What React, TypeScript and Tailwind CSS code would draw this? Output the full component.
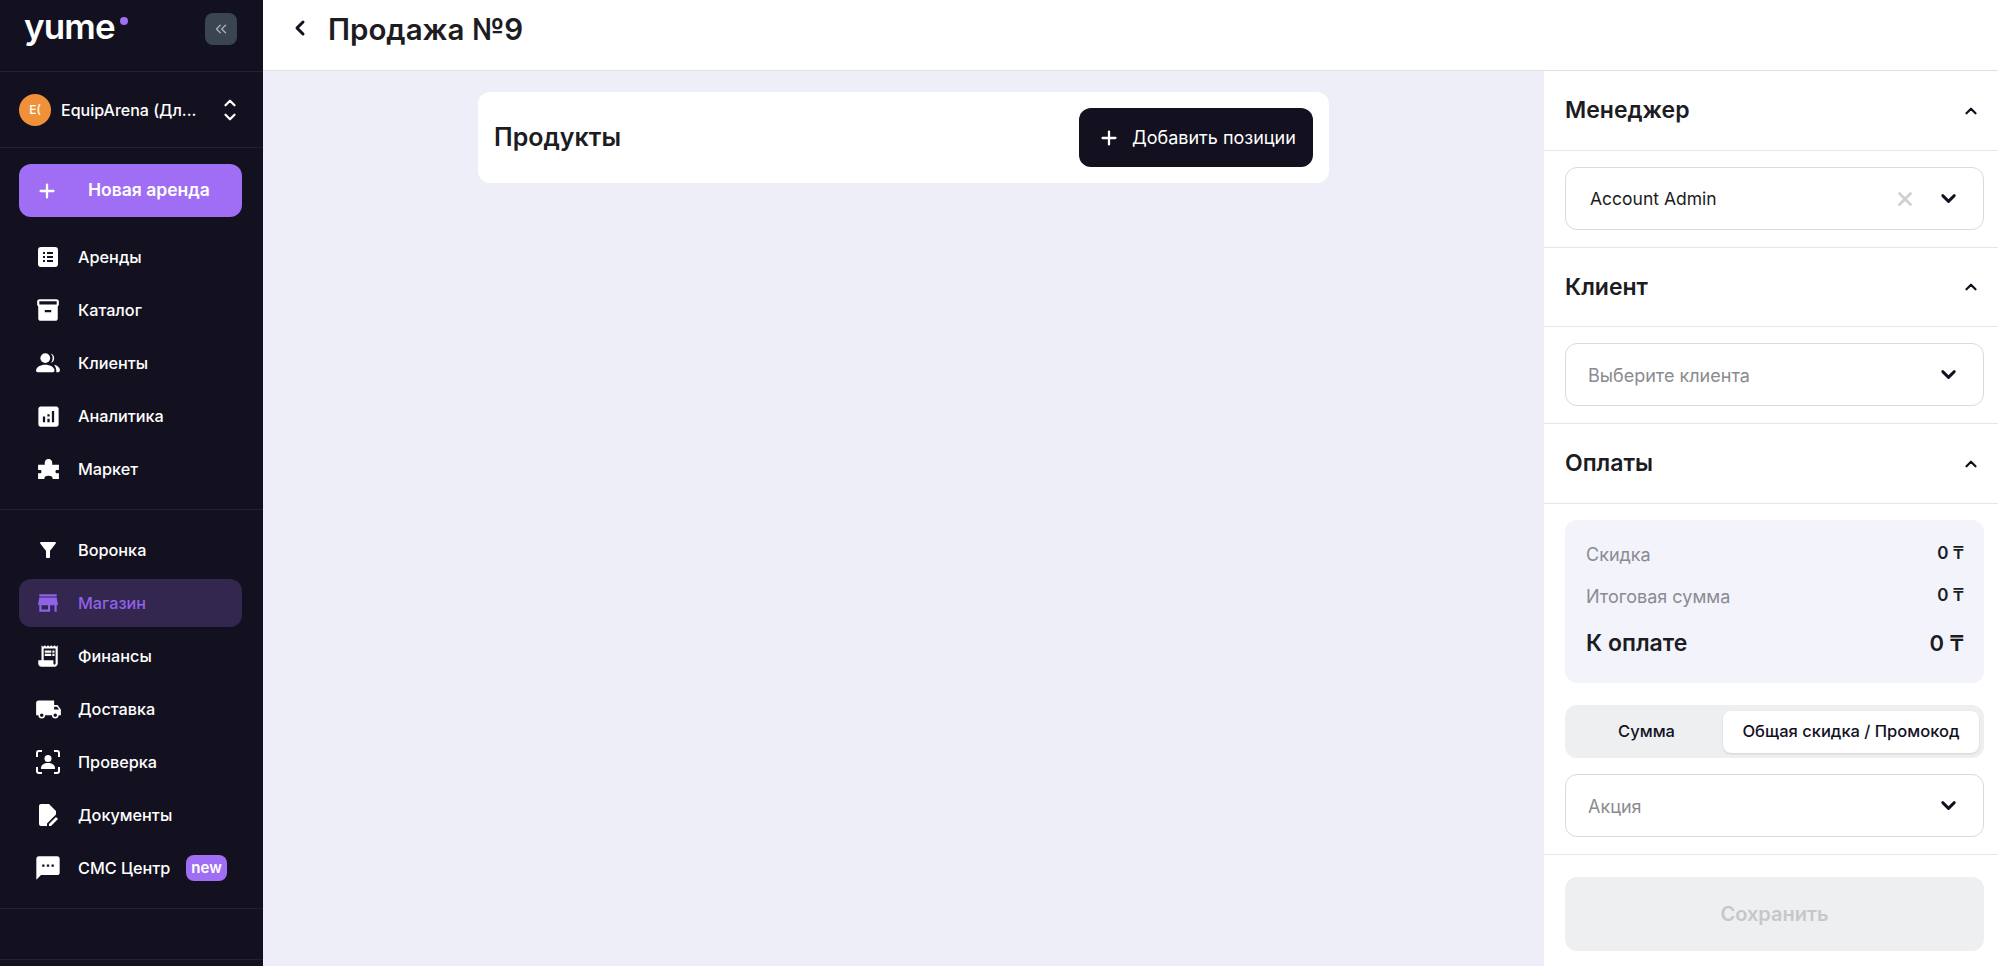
import React from 'react';
import { ChevronDown, ChevronLeft, ChevronUp, ChevronsLeft, Plus, X } from 'lucide-react';
import {
  MdAnalytics,
  MdFilterAlt,
  MdInventory2,
  MdLocalShipping,
  MdReceiptLong,
  MdSms,
  MdStore,
} from 'react-icons/md';

// small hand drawn icons for the ones the packs don't have
const ListIcon = () => (
  <svg width="24" height="24" viewBox="0 0 24 24" fill="currentColor">
    <path
      fillRule="evenodd"
      d="M5 2h14a3 3 0 0 1 3 3v14a3 3 0 0 1-3 3H5a3 3 0 0 1-3-3V5a3 3 0 0 1 3-3zm2 5v2h2V7H7zm4 0v2h6V7h-6zm-4 4v2h2v-2H7zm4 0v2h6v-2h-6zm-4 4v2h2v-2H7zm4 0v2h6v-2h-6z"
    />
  </svg>
);

const PeopleIcon = () => (
  <svg width="26" height="26" viewBox="0 0 24 24" fill="currentColor">
    <circle cx="9.5" cy="7.5" r="4.5" />
    <path d="M1 19c0-3.5 4-5.5 8.5-5.5S18 15.500 18 19c0 1-.6 1.500-1.500 1.500h-14C1.600 20.500 1 20 1 19z" />
    <path d="M14.500 3.200a4.500 4.500 0 0 1 0 8.600 6 6 0 0 0 0-8.600z" />
    <path d="M17.500 13.500c3 .5 5.500 2.500 5.500 5 0 1.200-.6 2-1.500 2h-1.800c.2-2.700-.6-5.200-2.200-7z" />
  </svg>
);

const PuzzleIcon = () => (
  <svg width="25" height="25" viewBox="0 0 24 24" fill="currentColor">
    <path d="M2 7.500h6.500C8 4 9.500 2 12 2s4 2 3.500 5.500H22v5h-2.500c-1 0-1 3 0 3H22V21h-6c0-2-1-3-4-3s-4 1-4 3H2v-5.500h2.500c1 0 1-3 0-3H2z" />
  </svg>
);

const FaceIcon = () => (
  <svg width="24" height="24" viewBox="0 0 24 24" fill="none" stroke="currentColor" strokeWidth="2">
    <path d="M1 7V3a2 2 0 0 1 2-2h3M18 1h3a2 2 0 0 1 2 2v4M1 17v4a2 2 0 0 0 2 2h3M18 23h3a2 2 0 0 0 2-2v-4" />
    <circle cx="12" cy="8.5" r="3.5" fill="currentColor" stroke="none" />
    <path d="M5 18c0-3 3-5 7-5s7 2 7 5v1H5z" fill="currentColor" stroke="none" />
  </svg>
);

const DocIcon = () => (
  <svg width="24" height="24" viewBox="0 0 24 24" fill="currentColor">
    <path d="M5 1h8l7 7v3.500L11 20.500V23H5a2 2 0 0 1-2-2V3a2 2 0 0 1 2-2z" />
    <path d="M13 23v-2l7-7 2 2-7 7h-2z" />
  </svg>
);

const navTop = [
  { label: 'Аренды', icon: <ListIcon /> },
  { label: 'Каталог', icon: <MdInventory2 size={26} /> },
  { label: 'Клиенты', icon: <PeopleIcon /> },
  { label: 'Аналитика', icon: <MdAnalytics size={27} /> },
  { label: 'Маркет', icon: <PuzzleIcon /> },
];

const navBottom = [
  { label: 'Воронка', icon: <MdFilterAlt size={24} /> },
  { label: 'Магазин', icon: <MdStore size={26} />, active: true },
  { label: 'Финансы', icon: <MdReceiptLong size={26} /> },
  { label: 'Доставка', icon: <MdLocalShipping size={27} /> },
  { label: 'Проверка', icon: <FaceIcon /> },
  { label: 'Документы', icon: <DocIcon /> },
  { label: 'СМС Центр', icon: <MdSms size={28} />, badge: 'new' },
];

type NavProps = { label: string; icon: React.ReactNode; active?: boolean; badge?: string };

const NavItem = ({ label, icon, active, badge }: NavProps) => (
  <div
    className={`flex h-12 items-center rounded-xl pl-[14px] text-[16.25px] font-medium ${
      active ? 'bg-[#33264f] text-[#8f62ea]' : 'text-white'
    }`}
  >
    <span className="flex w-[30px] justify-center">{icon}</span>
    <span className="ml-[15px]">{label}</span>
    {badge && (
      <span className="ml-[16px] rounded-lg bg-[#9f6ef5] px-[5px] py-[3px] text-[15px] leading-5 font-semibold">{badge}</span>
    )}
  </div>
);

const Sidebar = () => (
  <aside className="flex h-full w-[263px] shrink-0 flex-col bg-[#13111f]">
    <div className="flex h-[72px] shrink-0 items-start justify-between border-b border-[#20242f] pr-[26px] pl-6">
      <div className="relative">
        <span className="block text-[35px] leading-[52px] font-semibold tracking-tight text-white">yume</span>
        <span className="absolute top-[17px] -right-[13px] h-2 w-2 rounded-full bg-[#9f6ef5]" />
      </div>
      <button className="mt-[13px] flex h-8 w-8 items-center justify-center rounded-lg bg-[#3b4552] text-[#a3abb5]">
        <ChevronsLeft size={18} />
      </button>
    </div>
    <div className="flex h-[76px] shrink-0 items-center border-b border-[#20242f] pr-[24px] pl-[19px]">
      <span className="flex h-8 w-8 items-center justify-center rounded-full bg-[#f0913a] text-xs font-medium text-white">
        E(
      </span>
      <span className="ml-[10px] flex-1 text-base font-medium text-white">EquipArena (Дл...</span>
      <span className="flex flex-col text-white">
        <ChevronUp size={18} strokeWidth={3} className="-mb-1" />
        <ChevronDown size={18} strokeWidth={3} />
      </span>
    </div>
    <div className="flex flex-col gap-[5px] border-b border-[#20242f] pt-4 pr-[21px] pb-4 pl-[19px]">
      <button className="mb-[11px] flex h-[53px] items-center rounded-xl bg-[#9f6ef5] pl-[17px] font-semibold text-white">
        <Plus size={22} strokeWidth={2.5} />
        <span className="ml-[30px] text-[17.5px]">Новая аренда</span>
      </button>
      {navTop.map((item) => (
        <NavItem key={item.label} {...item} />
      ))}
    </div>
    <div className="flex flex-col gap-[5px] border-b border-[#20242f] py-4 pr-[21px] pl-[19px]">
      {navBottom.map((item) => (
        <NavItem key={item.label} {...item} />
      ))}
    </div>
    <div className="h-[51px] shrink-0 border-b border-[#20242f]" />
  </aside>
);

const SectionHead = ({ title, short }: { title: string; short?: boolean }) => (
  <div
    className={`flex items-center justify-between border-b border-[#e6e7eb] pr-[18px] pl-[21px] ${
      short ? 'h-[79px]' : 'h-20'
    }`}
  >
    <span className="text-[23px] font-semibold text-[#1c1c22]">{title}</span>
    <ChevronUp size={18} strokeWidth={3} className="text-[#13111f]" />
  </div>
);

const Select = ({ text, placeholder, clear }: { text: string; placeholder?: boolean; clear?: boolean }) => (
  <div className="flex h-[63px] items-center rounded-xl border border-[#d9dadf] bg-white pr-[23px]">
    <span
      className={`flex-1 pt-px ${placeholder ? 'pl-[22px] text-[18px] text-[#8a8b90]' : 'pl-[24px] text-[17.5px] text-[#1c1c22]'}`}
    >
      {text}
    </span>
    {clear && <X size={22} strokeWidth={3} className="mr-[21px] text-[#cfd0d4]" />}
    <ChevronDown size={23} strokeWidth={3} className="text-[#13111f]" />
  </div>
);

const Box = ({ children }: { children: React.ReactNode }) => (
  <div className="border-b border-[#e6e7eb] pt-4 pr-[14px] pb-[17px] pl-[21px]">{children}</div>
);

const RightPanel = () => (
  <div className="flex w-[454px] shrink-0 flex-col bg-white">
    <SectionHead title="Менеджер" />
    <Box>
      <Select text="Account Admin" clear />
    </Box>
    <SectionHead title="Клиент" short />
    <Box>
      <Select text="Выберите клиента" placeholder />
    </Box>
    <SectionHead title="Оплаты" />
    <Box>
      <div className="flex h-[163px] flex-col rounded-xl bg-[#f2f3fb] pt-[18px] pr-[20px] pl-[21px]">
        <div className="flex h-[32px] items-center justify-between text-[18px]">
          <span className="text-[#8a8b90]">Скидка</span>
          <span className="text-[17px] font-semibold text-[#1c1c22]">0 ₸</span>
        </div>
        <div className="mt-[10px] flex h-[32px] items-center justify-between text-[18px]">
          <span className="text-[#8a8b90]">Итоговая сумма</span>
          <span className="text-[17px] font-semibold text-[#1c1c22]">0 ₸</span>
        </div>
        <div className="mt-[15px] flex h-[32px] items-center justify-between text-[23px] font-semibold text-[#1c1c22]">
          <span>К оплате</span>
          <span className="text-[22px]">0 ₸</span>
        </div>
      </div>
      <div className="mt-[22px] flex h-[53px] items-center rounded-xl bg-[#eeeff1] p-[5px] text-[16.5px] font-medium text-[#13111f]">
        <span className="w-[153px] text-center">Сумма</span>
        <span className="flex h-[42px] flex-1 items-center justify-center rounded-lg bg-white shadow-sm">
          Общая скидка / Промокод
        </span>
      </div>
      <div className="mt-4">
        <Select text="Акция" placeholder />
      </div>
    </Box>
    <div className="flex-1 pt-[22px] pr-[14px] pl-[21px]">
      <button className="h-[74px] w-full rounded-xl bg-[#eeeff1] text-[20px] font-semibold text-[#c6c7cb]">
        Сохранить
      </button>
    </div>
  </div>
);

const App: React.FC = () => {
  return (
    <div className="flex h-screen w-full overflow-hidden font-['Inter',sans-serif]">
      <Sidebar />
      <div className="flex min-w-0 flex-1 flex-col">
        <header className="flex h-[71px] shrink-0 items-start border-b border-[#dfe0e5] bg-white pl-[25px] text-[#13111f]">
          <ChevronLeft size={24} strokeWidth={3} className="mt-4" />
          <h1 className="ml-[16px] pt-[9px] text-[29.5px] leading-[40px] font-semibold text-[#1c1c22]">Продажа №9</h1>
        </header>
        <div className="flex min-h-0 flex-1">
          <main className="flex flex-1 justify-center bg-[#edeef7] pt-[21px]">
            <div className="flex h-[91px] w-[851px] items-center justify-between rounded-xl bg-white pr-4 pl-4">
              <span className="text-[25px] font-semibold text-[#1c1c22]">Продукты</span>
              <button className="flex h-[59px] w-[234px] items-center rounded-xl bg-[#13111f] pl-[19px] text-white">
                <Plus size={22} strokeWidth={2.5} />
                <span className="ml-[12px] text-lg">Добавить позиции</span>
              </button>
            </div>
          </main>
          <RightPanel />
        </div>
      </div>
    </div>
  );
};

export default App;
